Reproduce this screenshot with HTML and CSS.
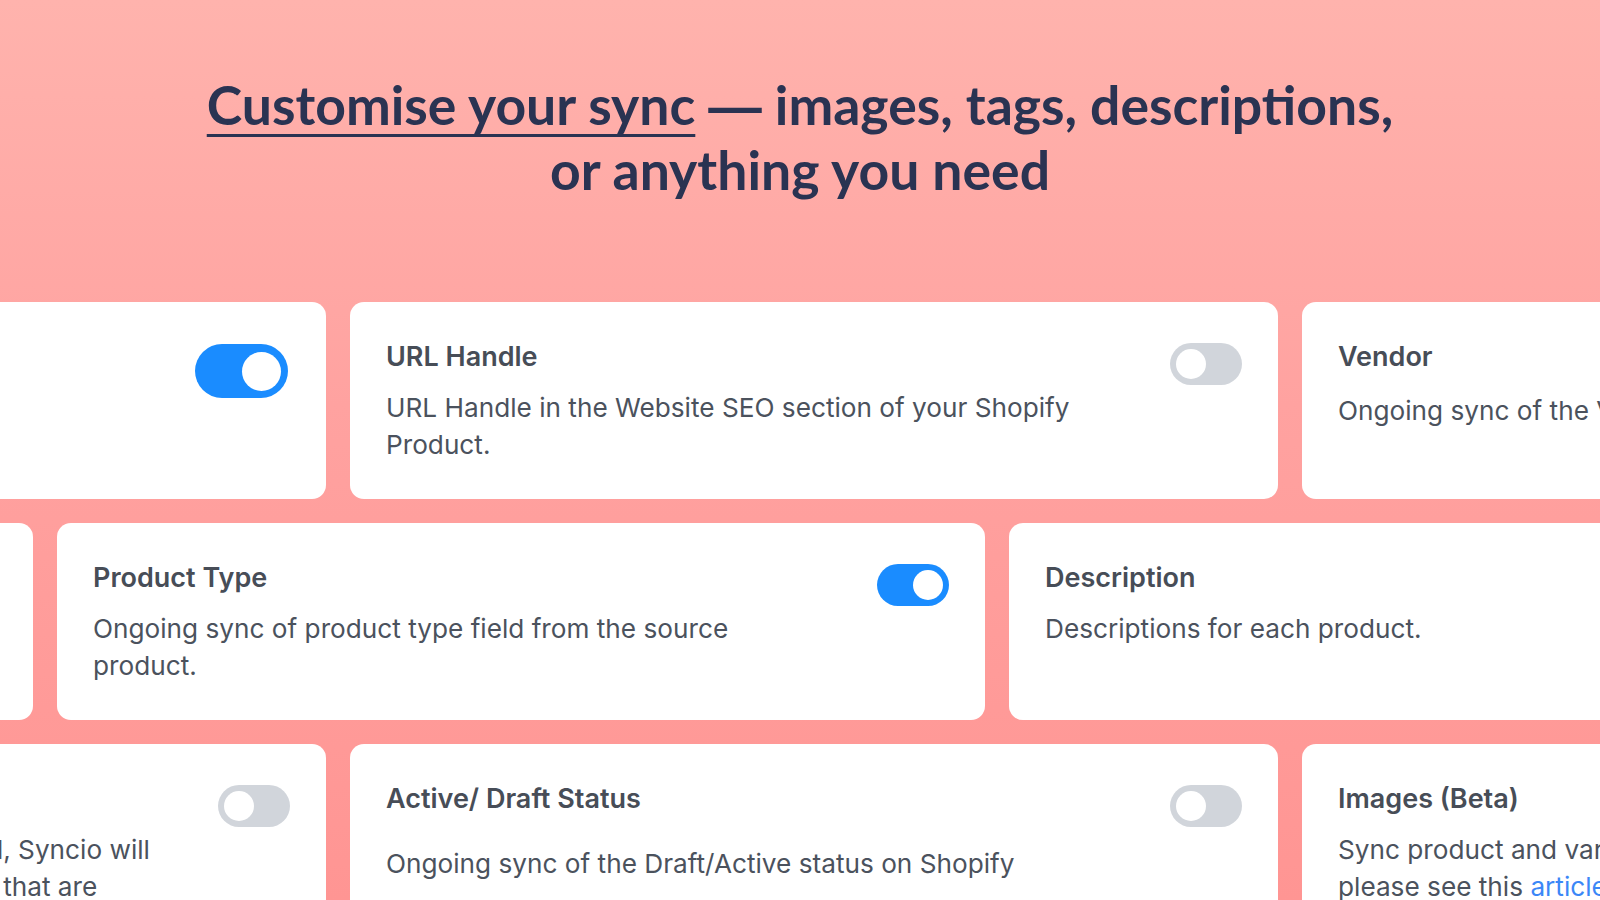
FILE: index.html
```html
<!DOCTYPE html>
<html lang="en">
<head>
  <meta charset="UTF-8" />
  <meta name="viewport" content="width=device-width, initial-scale=1.0"/>
  <title>Customise your sync</title>
  <link rel="stylesheet" href="styles.css">
</head>
<body>
  <div class="hero">
    <h1><span class="underline">Customise your sync</span> <span class="dash">—</span> images, tags, descriptions,<br>or anything you need</h1>
  </div>

  <div class="rows">
    <div class="row row-a">
      <div class="card">
        <div class="card-body">
          <h3 class="card-title">Title</h3>
          <p class="card-text">Ongoing sync of the product title.</p>
        </div>
        <button class="switch large on"></button>
      </div>
      <div class="card">
        <div class="card-body">
          <h3 class="card-title">URL Handle</h3>
          <p class="card-text">URL Handle in the Website SEO section of your Shopify Product.</p>
        </div>
        <button class="switch"></button>
      </div>
      <div class="card">
        <div class="card-body">
          <h3 class="card-title">Vendor</h3>
          <p class="card-text vendor">Ongoing sync of the Vendor field.</p>
        </div>
        <button class="switch"></button>
      </div>
    </div>

    <div class="row row-b">
      <div class="card">
        <div class="card-body">
          <h3 class="card-title">Price</h3>
          <p class="card-text">Ongoing sync of the product price.</p>
        </div>
        <button class="switch"></button>
      </div>
      <div class="card">
        <div class="card-body">
          <h3 class="card-title">Product Type</h3>
          <p class="card-text">Ongoing sync of product type field from the source product.</p>
        </div>
        <button class="switch on"></button>
      </div>
      <div class="card">
        <div class="card-body">
          <h3 class="card-title">Description</h3>
          <p class="card-text">Descriptions for each product.</p>
        </div>
        <button class="switch"></button>
      </div>
    </div>

    <div class="row row-a">
      <div class="card">
        <div class="card-body">
          <h3 class="card-title">Tags</h3>
          <p class="card-text fixed">Ongoing sync of your product tags. If enabled, Syncio will<br>overwrite destination tags with the exact tags that are<br>on the source product.</p>
        </div>
        <button class="switch"></button>
      </div>
      <div class="card">
        <div class="card-body">
          <h3 class="card-title">Active/ Draft Status</h3>
          <p class="card-text spaced">Ongoing sync of the Draft/Active status on Shopify</p>
        </div>
        <button class="switch"></button>
      </div>
      <div class="card">
        <div class="card-body">
          <h3 class="card-title">Images (Beta)</h3>
          <p class="card-text fixed">Sync product and variant images. For more information,<br>please see this <a href="#">article</a>.</p>
        </div>
        <button class="switch"></button>
      </div>
    </div>
  </div>

  <script>
    document.querySelectorAll(".switch").forEach(btn => {
      btn.addEventListener("click", () => btn.classList.toggle("on"));
    });
  </script>
</body>
</html>
```

FILE: styles.css
```css
body {
  margin: 0;
  height: 100vh;
  overflow: hidden;
  font-family: Inter, "Noto Sans", sans-serif;
  background: linear-gradient(180deg, #ffb3ad 0%, #ffa2a0 45%, #ff9593 100%);
}

.hero {
  padding: 72px 0 100px;
  text-align: center;
}

.hero h1 {
  margin: 0;
  font-family: Lato, "Noto Sans", sans-serif;
  font-weight: 700;
  font-size: 53.5px;
  line-height: 65px;
  color: #2a3352;
}

.underline {
  text-decoration: underline;
  text-decoration-thickness: 3px;
  text-underline-offset: 9px;
}

.dash {
  font-family: "Liberation Sans", sans-serif;
  line-height: 1;
}

.rows {
  display: flex;
  flex-direction: column;
  gap: 24px;
}

.row {
  display: flex;
  gap: 24px;
}

.row-a {
  margin-left: -602px;
}

.row-b {
  margin-left: -895px;
}

.card {
  flex: 0 0 928px;
  height: 197px;
  box-sizing: border-box;
  padding: 36px;
  background: #fff;
  border-radius: 14px;
  display: flex;
  justify-content: space-between;
  align-items: flex-start;
}

.card-body {
  max-width: 730px;
}

.card-title {
  margin: 0;
  font-size: 27px;
  font-weight: 600;
  line-height: 37px;
  color: #474d57;
}

.card-text {
  margin: 14px 0 0;
  font-size: 26.2px;
  line-height: 37px;
  color: #4b525d;
}

.card-text.fixed {
  white-space: nowrap;
}

.card-text.spaced {
  margin-top: 28px;
}

.card-text.vendor {
  margin-top: 17px;
}

.card-text a {
  color: #3b87f7;
  text-decoration: none;
}

.switch {
  flex-shrink: 0;
  display: flex;
  align-items: center;
  width: 72px;
  height: 42px;
  margin-top: 5px;
  padding: 0 6px;
  border: none;
  border-radius: 21px;
  background: #d1d5db;
  cursor: pointer;
}

.switch::after {
  content: "";
  width: 30px;
  height: 30px;
  border-radius: 50%;
  background: #fff;
}

.switch.on {
  justify-content: flex-end;
  background: #1a8cff;
}

.switch.large {
  width: 93px;
  height: 54px;
  margin: 6px 2px 0 0;
  padding: 0 7px;
  border-radius: 27px;
}

.switch.large::after {
  width: 39px;
  height: 39px;
}
```
